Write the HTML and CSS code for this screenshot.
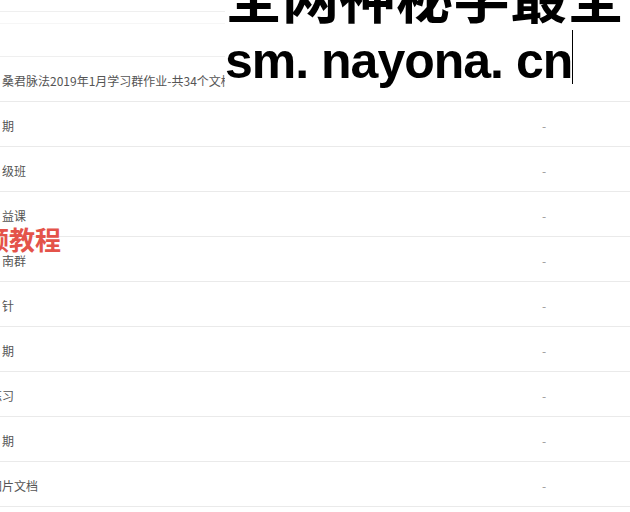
FILE: index.html
```html
<!DOCTYPE html>
<html lang="zh-CN">
<head>
<meta charset="utf-8">
<title>文档列表</title>
<link rel="stylesheet" href="styles.css">
</head>
<body>
<div class="page">
  <div class="list">
    <div class="band band-a"></div>
    <div class="band band-b"></div>
    <div class="band band-c"></div>
    <div class="row"><div class="name">桑君脉法2019年1月学习群作业-共34个文档</div><div class="dash"></div></div>
    <div class="row"><div class="name">期</div><div class="dash">-</div></div>
    <div class="row"><div class="name">级班</div><div class="dash">-</div></div>
    <div class="row"><div class="name">益课</div><div class="dash">-</div></div>
    <div class="row"><div class="name">南群</div><div class="dash">-</div></div>
    <div class="row"><div class="name">针</div><div class="dash">-</div></div>
    <div class="row"><div class="name">期</div><div class="dash">-</div></div>
    <div class="row"><div class="name"><span class="cut">练</span>习</div><div class="dash">-</div></div>
    <div class="row"><div class="name">期</div><div class="dash">-</div></div>
    <div class="row"><div class="name"><span class="cut">图</span>片文档</div><div class="dash">-</div></div>
  </div>
  <div class="caption">
    <div class="cap-cjk">全网神秘学最全</div>
    <div class="cap-url">sm. nayona. cn<span class="caret"></span></div>
  </div>
  <div class="stamp"><span class="stamp-cut">频</span>教程</div>
</div>
</body>
</html>
```

FILE: styles.css
```css
html, body {
  margin: 0;
  padding: 0;
  background: #fff;
}
body {
  width: 630px;
  height: 512px;
  overflow: hidden;
  font-family: "Noto Sans CJK SC", "Microsoft YaHei", sans-serif;
}
.page {
  position: relative;
  width: 630px;
  height: 512px;
  overflow: hidden;
}
.list {
  display: flex;
  flex-direction: column;
}
.band {
  border-bottom: 1px solid #efefef;
}
.band-a { height: 11px; }
.band-b { height: 11px; border-bottom-color: #f6f6f6; }
.band-c { height: 32px; }
.row {
  display: grid;
  grid-template-columns: 524px 40px 1fr;
  align-items: center;
  height: 44px;
  border-bottom: 1px solid #eaeaea;
  font-size: 12px;
  color: #555;
}
.name {
  padding-left: 2px;
  padding-top: 2px;
  white-space: nowrap;
}
.cut {
  margin-left: -12px;
}
.dash {
  text-align: center;
  color: #999;
  padding-top: 2px;
}
.caption {
  position: absolute;
  left: 225px;
  top: 0;
  width: 405px;
  height: 95px;
  background: #fff;
  overflow: hidden;
  color: #000;
  font-weight: 700;
}
.cap-cjk {
  font-family: "Noto Sans CJK SC", sans-serif;
  font-size: 57px;
  line-height: 57px;
  margin-top: -35px;
  white-space: nowrap;
}
.cap-url {
  font-family: "Liberation Sans", Arial, sans-serif;
  font-size: 50px;
  line-height: 57px;
  letter-spacing: -1px;
  margin-top: 8px;
  white-space: nowrap;
}
.caret {
  display: inline-block;
  width: 1px;
  height: 54px;
  background: #000;
  vertical-align: -6px;
}
.stamp {
  position: absolute;
  left: -17px;
  top: 226px;
  font-size: 26px;
  line-height: 26px;
  font-weight: 700;
  color: #e4534a;
  white-space: nowrap;
}
```
